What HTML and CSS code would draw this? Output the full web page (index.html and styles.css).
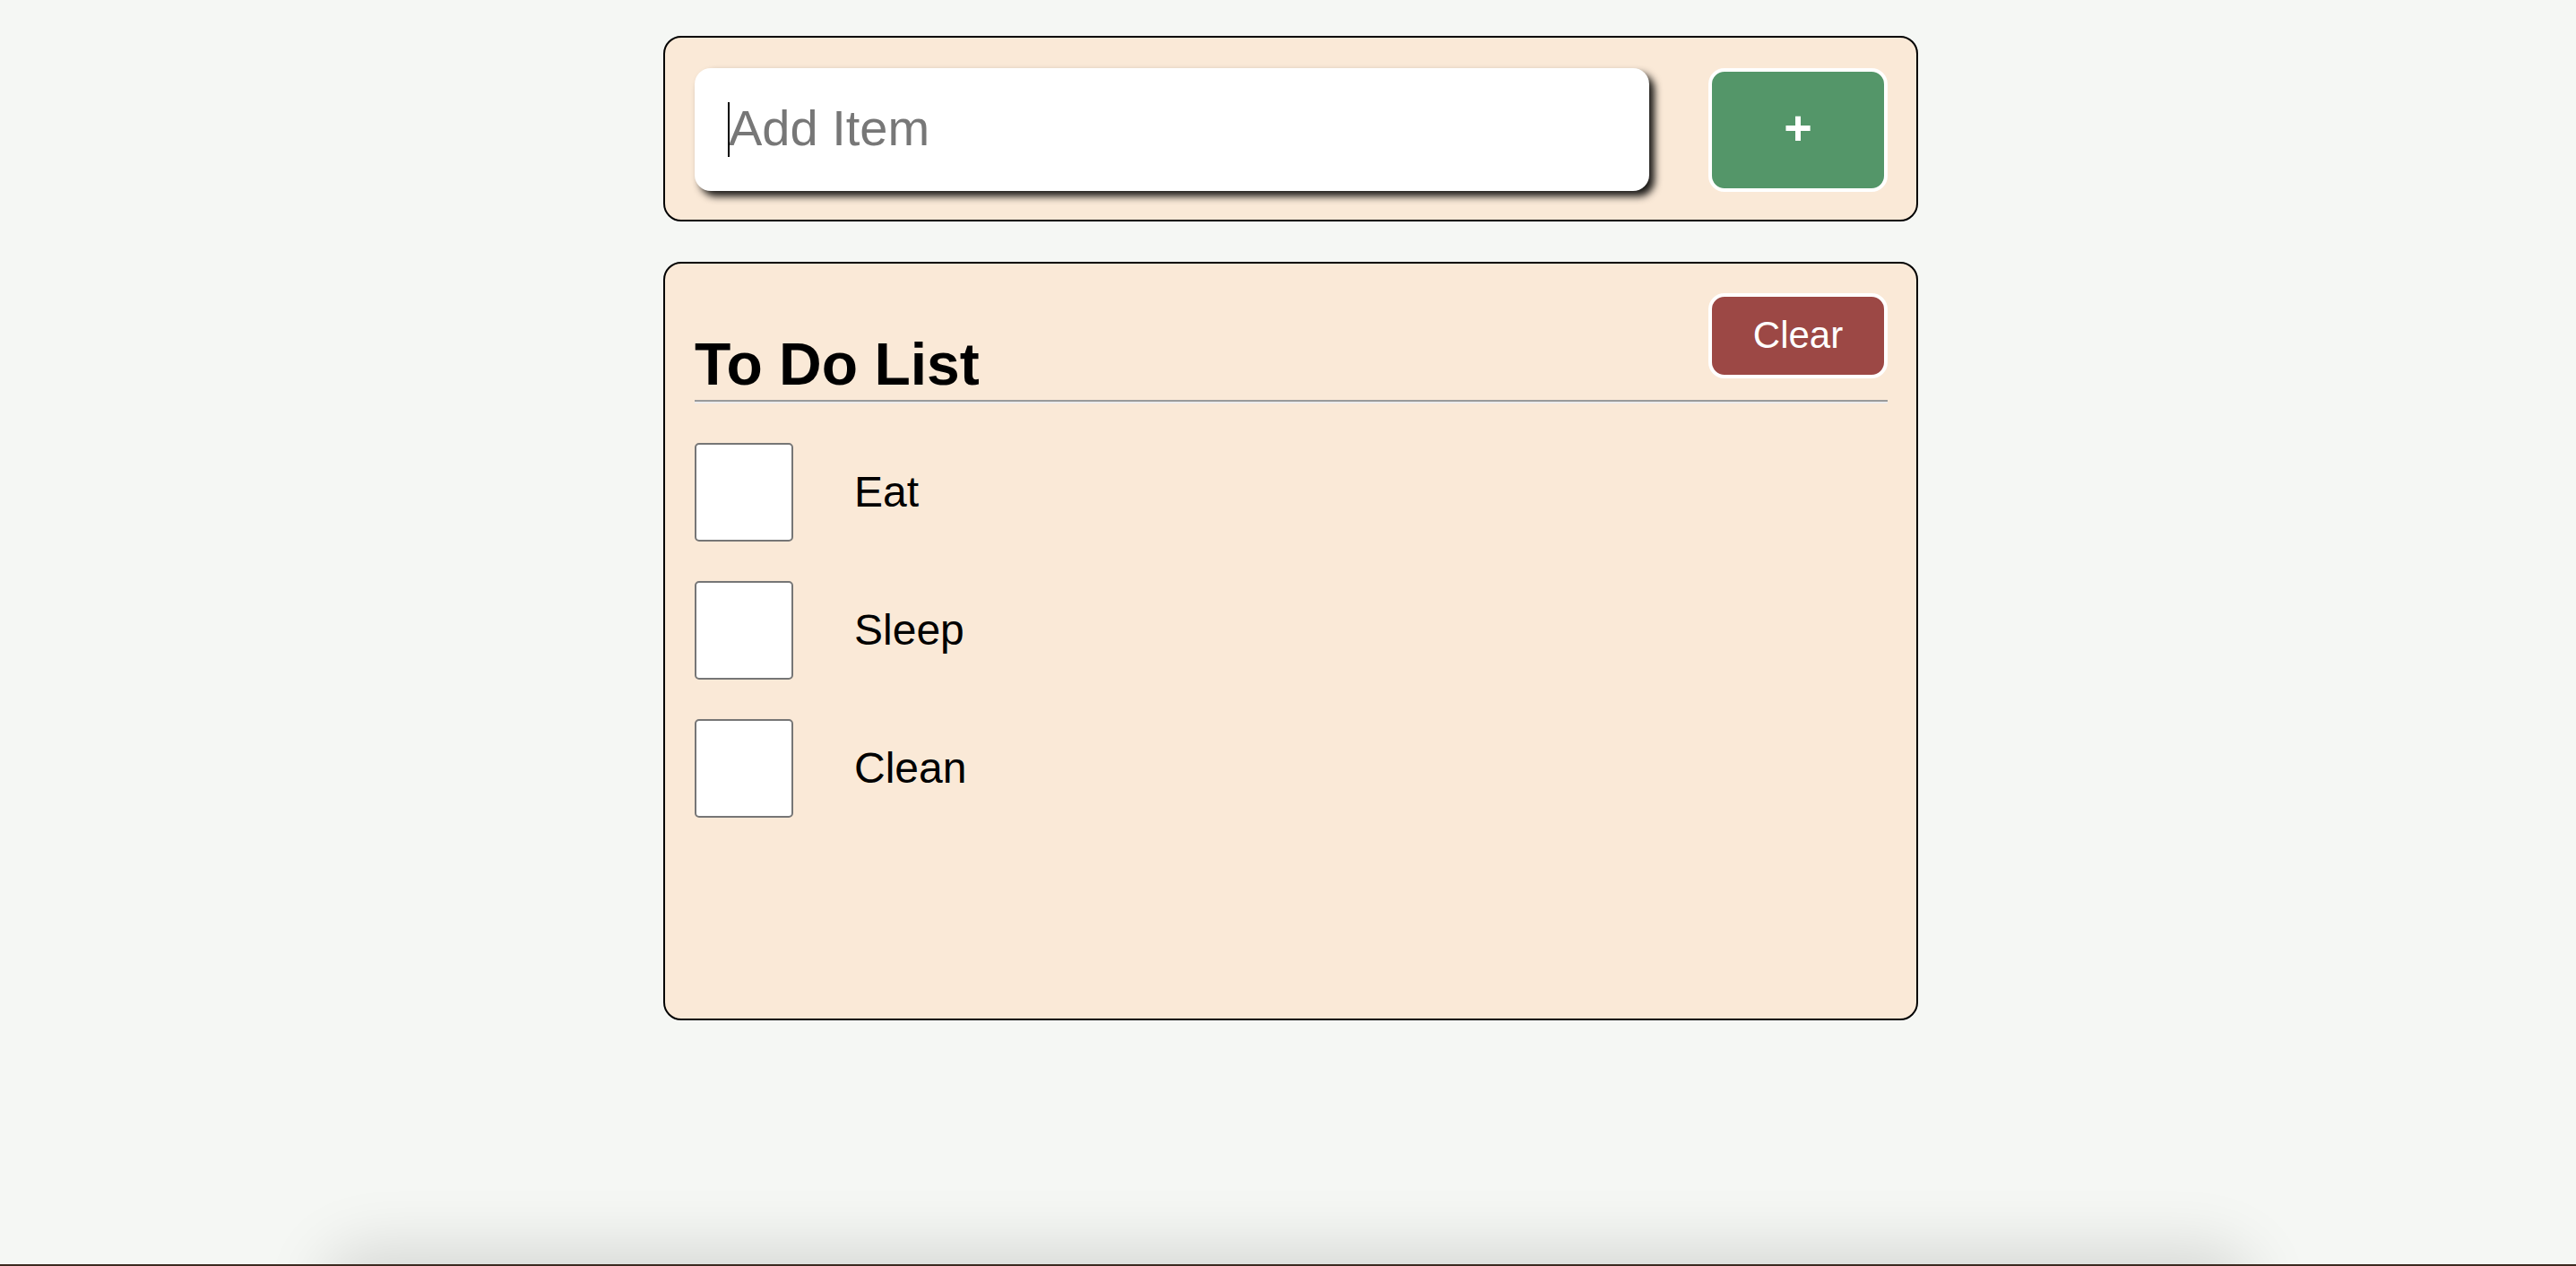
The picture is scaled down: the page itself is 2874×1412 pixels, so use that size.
FILE: index.html
```html
<!DOCTYPE html>
<html lang="en">
<head>
<meta charset="utf-8">
<title>To Do List</title>
<link rel="stylesheet" href="styles.css">
</head>
<body>
<main class="app">
  <section class="card add-card">
    <div class="input-wrap">
      <input class="add-input" type="text" placeholder="Add Item">
      <span class="caret"></span>
    </div>
    <button class="btn btn-add" type="button">+</button>
  </section>
  <section class="card list-card">
    <div class="list-head">
      <h2 class="list-title">To Do List</h2>
      <button class="btn btn-clear" type="button">Clear</button>
    </div>
    <hr class="divider">
    <ul class="items">
      <li class="item"><span class="box"></span><span class="label">Eat</span></li>
      <li class="item"><span class="box"></span><span class="label">Sleep</span></li>
      <li class="item"><span class="box"></span><span class="label">Clean</span></li>
    </ul>
  </section>
</main>
<div class="dock-shadow"></div>
<div class="desk-strip"></div>
</body>
</html>
```

FILE: styles.css
```css
html, body {
  height: 100%;
  overflow: hidden;
}

body {
  margin: 0;
  background: #f5f7f4;
  font-family: "Liberation Sans", Arial, Helvetica, sans-serif;
  color: #000;
}

.app {
  width: 1400px;
  margin-left: calc(50% - 697px);
  padding-top: 40px;
  display: flex;
  flex-direction: column;
  gap: 45px;
}

.card {
  box-sizing: border-box;
  background: #fae9d7;
  border: 2px solid #000;
  border-radius: 20px;
  padding: 33px 32px 33px 33px;
}

.add-card {
  display: flex;
  align-items: flex-start;
  gap: 66px;
  padding-top: 34px;
  padding-bottom: 31px;
}

.input-wrap {
  position: relative;
  width: 1065px;
  height: 137px;
  flex: none;
}

.add-input {
  box-sizing: border-box;
  width: 100%;
  height: 100%;
  border: none;
  outline: none;
  border-radius: 18px;
  background: #fff;
  box-shadow: 6px 6px 9px rgba(0, 0, 0, 0.9);
  padding: 0 0 4px 38px;
  font-family: inherit;
  font-size: 56px;
  color: #000;
}

.add-input::placeholder {
  color: #777;
}

.caret {
  position: absolute;
  left: 37px;
  top: 38px;
  width: 2px;
  height: 61px;
  background: #000;
}

.btn {
  box-sizing: border-box;
  width: 200px;
  border: 4px solid #fff;
  border-radius: 18px;
  color: #fff;
  font-family: inherit;
  cursor: pointer;
  padding: 0;
}

.btn-add {
  height: 138px;
  background: #549669;
  font-size: 54px;
  font-weight: bold;
  line-height: 1;
  padding-bottom: 6px;
}

.btn-clear {
  height: 95px;
  background: #9c4845;
  font-size: 42px;
  line-height: 1;
  padding-bottom: 2px;
}

.list-card {
  height: 846px;
}

.list-head {
  display: flex;
  justify-content: space-between;
  align-items: flex-start;
}

.list-title {
  margin: 42px 0 0;
  font-size: 66px;
  font-weight: bold;
  line-height: 75px;
}

.divider {
  margin: 2px 0 0;
  height: 0;
  border: none;
  border-top: 2px solid #9a9a9a;
  border-bottom: 2px solid #ececec;
}

.items {
  list-style: none;
  margin: 44px 0 0;
  padding: 0;
  display: flex;
  flex-direction: column;
  gap: 44px;
}

.item {
  display: flex;
  align-items: center;
  gap: 68px;
}

.box {
  box-sizing: border-box;
  width: 110px;
  height: 110px;
  background: #fff;
  border: 2px solid #767676;
  border-radius: 5px;
  flex: none;
}

.label {
  font-size: 48px;
  line-height: 1;
}

.dock-shadow {
  position: fixed;
  left: 380px;
  right: 380px;
  bottom: -60px;
  height: 60px;
  border-radius: 50px;
  box-shadow: 0 0 70px 20px rgba(0, 0, 0, 0.13);
}

.desk-strip {
  position: fixed;
  left: 0;
  right: 0;
  bottom: 0;
  height: 2px;
  background: #3c2a20;
}
```
